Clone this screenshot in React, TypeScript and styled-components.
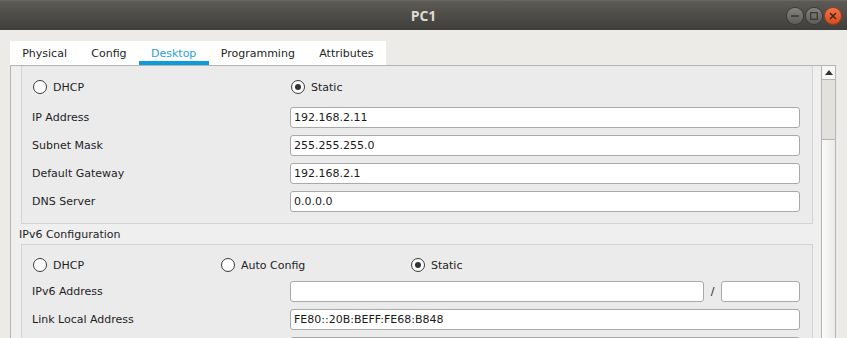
import React from 'react';
import styled, { createGlobalStyle } from 'styled-components';

const GlobalStyle = createGlobalStyle`
    html, body {
        margin: 0;
        padding: 0;
        background: #edebe7;
    }
    * {
        box-sizing: border-box;
    }
`;

const Window = styled.div`
    width: 847px;
    height: 338px;
    overflow: hidden;
    display: flex;
    flex-direction: column;
    background: #edebe7;
    font-family: "DejaVu Sans", "Liberation Sans", sans-serif;
    font-size: 11px;
    color: #1e1e1e;
`;

const TitleBar = styled.div`
    height: 30px;
    flex: none;
    display: grid;
    grid-template-columns: 1fr auto 1fr;
    align-items: center;
    background: linear-gradient(#5c5a55, #3f3e3a);
    border-top: 1px solid #6a6863;
`;

const Title = styled.div`
    grid-column: 2;
    font-family: "Open Sans", "DejaVu Sans", sans-serif;
    font-weight: 700;
    font-size: 14px;
    color: #dfdbd2;
    margin-top: -1px;
`;

const WindowButtons = styled.div`
    grid-column: 3;
    justify-self: end;
    display: flex;
    gap: 3px;
    padding-right: 6px;
`;

const RoundButton = styled.div<{ $close?: boolean }>`
    width: 16px;
    height: 16px;
    border-radius: 50%;
    display: flex;
    align-items: center;
    justify-content: center;
    background: ${p => p.$close
        ? 'linear-gradient(#f27645, #dc4a1b)'
        : 'linear-gradient(#85837e, #5d5c57)'};
    box-shadow: 0 0 0 1px ${p => p.$close ? '#a8391a' : '#3b3a36'};
`;

const Body = styled.div`
    flex: 1;
    display: flex;
    flex-direction: column;
    padding: 11px 0 0 10px;
    min-height: 0;
`;

const TabBar = styled.div`
    display: flex;
    align-self: flex-start;
    height: 24px;
    background: #ffffff;
`;

const Tab = styled.div<{ $active?: boolean }>`
    padding: 0 12.2px;
    line-height: 25px;
    color: ${p => p.$active ? '#2ba2da' : '#1e1e1e'};
    box-shadow: ${p => p.$active ? 'inset 0 -4px 0 #0c9dd8' : 'none'};
`;

const Panel = styled.div`
    flex: 1;
    width: 826px;
    display: flex;
    min-height: 0;
    border: 1px solid #b4b4b4;
    border-bottom: none;
    background: #efefef;
`;

const Content = styled.div`
    flex: 1;
    overflow: hidden;
    padding: 0 8px 0 10px;
`;

const Group = styled.div<{ $clipped?: boolean }>`
    display: flex;
    flex-direction: column;
    gap: 7px;
    padding: ${p => p.$clipped ? '10px' : '9px'} 12px 11px 10px;
    background: #ebebeb;
    border: 1px solid #d3d3d3;
    border-top: ${p => p.$clipped ? 'none' : '1px solid #d3d3d3'};
`;

const SectionLabel = styled.div`
    line-height: 20px;
    padding-top: 1px;
    margin: 0 0 -1px -2px;
`;

const RadioRow = styled.div<{ $cols: string; $after: number }>`
    display: grid;
    grid-template-columns: ${p => p.$cols};
    height: 22px;
    align-items: center;
    margin-bottom: ${p => p.$after}px;
`;

const RadioItem = styled.label`
    display: flex;
    align-items: center;
    gap: 6px;
    padding-left: 1px;
`;

const RadioCircle = styled.span<{ $checked?: boolean }>`
    width: 14px;
    height: 14px;
    border-radius: 50%;
    border: 1px solid #3a3a3a;
    background: #fdfdfd;
    display: flex;
    align-items: center;
    justify-content: center;

    &::after {
        content: '';
        width: 6px;
        height: 6px;
        border-radius: 50%;
        background: ${p => p.$checked ? '#333333' : 'transparent'};
    }
`;

const FieldRow = styled.div`
    display: grid;
    grid-template-columns: 258px 1fr;
    align-items: center;
    height: 21px;
`;

const FieldLabel = styled.div`
    line-height: 21px;
`;

const InputGroup = styled.div`
    display: flex;
    align-items: center;
`;

const Slash = styled.span`
    width: 17px;
    text-align: center;
`;

const TextBox = styled.div<{ $width?: number }>`
    flex: ${p => p.$width ? 'none' : '1'};
    width: ${p => p.$width ? `${p.$width}px` : 'auto'};
    height: 21px;
    line-height: 19px;
    padding: 0 3px;
    background: #ffffff;
    border: 1px solid #a9a9a9;
    border-radius: 3px;
    color: #1b1b1b;
    white-space: nowrap;
    overflow: hidden;
`;

const ScrollBar = styled.div`
    width: 14px;
    flex: none;
    display: flex;
    flex-direction: column;
    border-left: 1px solid #b4b4b4;
    background: linear-gradient(to right, #fbfbfa, #ecebe9);
`;

const ScrollButton = styled.div`
    height: 14px;
    display: flex;
    align-items: center;
    justify-content: center;
    border-bottom: 1px solid #b4b4b4;
    background: #f7f7f6;
`;

const ScrollThumb = styled.div`
    height: 60px;
    background: #e3e1de;
    border-bottom: 1px solid #b4b4b4;
`;

interface RadioProps {
    label: string,
    checked?: boolean
}

function Radio(props: RadioProps) {
    return (
        <RadioItem>
            <RadioCircle $checked={props.checked} />
            {props.label}
        </RadioItem>
    )
}

function Field(props: { label: string, value: string }) {
    return (
        <FieldRow>
            <FieldLabel>{props.label}</FieldLabel>
            <TextBox>{props.value}</TextBox>
        </FieldRow>
    )
}

const ipv4 = [
    ['IP Address', '192.168.2.11'],
    ['Subnet Mask', '255.255.255.0'],
    ['Default Gateway', '192.168.2.1'],
    ['DNS Server', '0.0.0.0'],
];

export default function App() {
    return (
        <Window>
            <GlobalStyle />
            <TitleBar>
                <Title>PC1</Title>
                <WindowButtons>
                    <RoundButton>
                        <svg width="8" height="8" viewBox="0 0 8 8">
                            <rect x="0" y="3.2" width="8" height="1.6" fill="#3a3935" />
                        </svg>
                    </RoundButton>
                    <RoundButton>
                        <svg width="8" height="8" viewBox="0 0 8 8">
                            <rect x="0.7" y="0.7" width="6.6" height="6.6" fill="none" stroke="#3a3935" strokeWidth="1.3" />
                        </svg>
                    </RoundButton>
                    <RoundButton $close>
                        <svg width="8" height="8" viewBox="0 0 8 8">
                            <path d="M1 1 L7 7 M7 1 L1 7" stroke="#3a2a22" strokeWidth="1.5" />
                        </svg>
                    </RoundButton>
                </WindowButtons>
            </TitleBar>
            <Body>
                <TabBar>
                    <Tab>Physical</Tab>
                    <Tab>Config</Tab>
                    <Tab $active>Desktop</Tab>
                    <Tab>Programming</Tab>
                    <Tab>Attributes</Tab>
                </TabBar>
                <Panel>
                    <Content>
                        <Group $clipped>
                            <RadioRow $cols="258px 1fr" $after={2}>
                                <Radio label="DHCP" />
                                <Radio label="Static" checked />
                            </RadioRow>
                            {ipv4.map(([label, value]) => (
                                <Field key={label} label={label} value={value} />
                            ))}
                        </Group>
                        <SectionLabel>IPv6 Configuration</SectionLabel>
                        <Group>
                            <RadioRow $cols="188px 190px 1fr" $after={-2}>
                                <Radio label="DHCP" />
                                <Radio label="Auto Config" />
                                <Radio label="Static" checked />
                            </RadioRow>
                            <FieldRow>
                                <FieldLabel>IPv6 Address</FieldLabel>
                                <InputGroup>
                                    <TextBox></TextBox>
                                    <Slash>/</Slash>
                                    <TextBox $width={79}></TextBox>
                                </InputGroup>
                            </FieldRow>
                            <Field label="Link Local Address" value="FE80::20B:BEFF:FE68:B848" />
                            <Field label="" value="" />
                        </Group>
                    </Content>
                    <ScrollBar>
                        <ScrollButton>
                            <svg width="8" height="5" viewBox="0 0 8 5">
                                <path d="M0 5 L4 0 L8 5 Z" fill="#333333" />
                            </svg>
                        </ScrollButton>
                        <ScrollThumb />
                    </ScrollBar>
                </Panel>
            </Body>
        </Window>
    )
}
